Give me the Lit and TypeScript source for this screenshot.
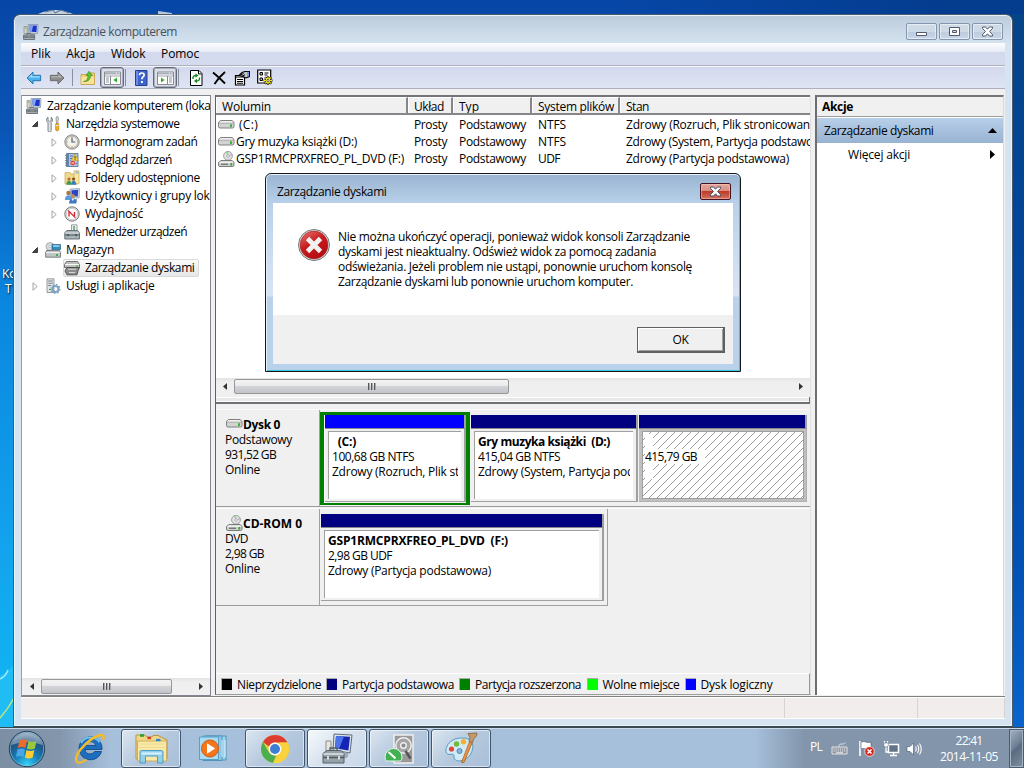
import { LitElement, html, svg, css, nothing } from "lit";
import { customElement } from "lit/decorators.js";
import { styleMap } from "lit/directives/style-map.js";

const FAMILY = '"Open Sans", "Noto Sans", sans-serif';
const pen = document.createElement("canvas").getContext("2d")!;

/* Label whose tracking is adjusted to a given width. A "|" ends the measured part. */
function t(text: string, w: number, bold = false, size = 12) {
  const part = text.split("|")[0];
  pen.font = `${bold ? 700 : 400} ${size}px ${FAMILY}`;
  const ls = (w - pen.measureText(part).width) / part.length;
  return html`<span class="t ${bold ? "b" : ""}" style=${styleMap({ letterSpacing: ls.toFixed(3) + "px", fontSize: size + "px" })}>${text.replace("|", "")}</span>`;
}

const ic = (body: unknown, w = 16, h = 16, vb = `0 0 ${w} ${h}`) =>
  html`<svg class="ic" width=${w} height=${h} viewBox=${vb}>${body}</svg>`;

const computer = svg`<path d="M5 .5h10l-.5 9-9-.8z" fill="#dfe6ee" stroke="#8593a5" stroke-width=".8"/><path d="M6.3 1.6h7.6l-.4 6.6-6.8-.6z" fill="#1c35c8"/><path d="M6.3 1.6h4L8.6 7.8l-1.9-.2z" fill="#7fa5f0"/><path d="M1 2.5h3.2v7H1z" fill="#d6d6cc" stroke="#8d8d85" stroke-width=".7"/><path d="M1.8 4h1.6" stroke="#58a858"/><path d="M9 9h3v2H9z" fill="#9aa4ae"/><path d="M.6 11h11v4.5H.6z" fill="#a3abb0" stroke="#58636b" stroke-width=".8"/><path d="M4 11V9.6h4V11M.6 13h11M3 12.4v1.4M9 12.4v1.4" stroke="#4b555c" fill="none" stroke-width=".8"/>`;
const tools = svg`<path d="M3 1.2v3.3l1.6 1 1.6-1V1.2C8 2.4 8 5.300 6.200 6.400V14.500a1.600 1.600 0 0 1-3.200 0V6.400C1 5.300 1 2.400 3 1.200z" fill="#e0e3e5" stroke="#6f787d" stroke-width=".9"/><path d="M11.500.8h1.500l.4 2-.7 5h-1l-.7-5z" fill="#d8dcdf" stroke="#7b8288" stroke-width=".7"/><path d="M10.700 7.800h3v6.200q-1.500 2-3 0z" fill="#f5b21c" stroke="#b87c08" stroke-width=".7"/><path d="M10.700 9.500h3" stroke="#e8e8e8"/>`;
const clock = svg`<circle cx="8" cy="8" r="7.200" fill="#c9c9c6" stroke="#858585" stroke-width=".9"/><circle cx="8" cy="8" r="5.600" fill="#f6f3e4" stroke="#a6a59f" stroke-width=".6"/><path d="M8 3.800V8h3.400" stroke="#3f6390" fill="none" stroke-width="1.200"/><path d="M8 2.900v.8M8 12.300v.8M2.900 8h.8" stroke="#c07a3c"/>`;
const events = svg`<path d="M2.500 1.500h11.500v13H2.500z" fill="#a9c6ea" stroke="#5b7896" stroke-width=".9"/><path d="M4 2v12" stroke="#4a6fa5" stroke-width="1.500"/><path d="M6 4h3M6 6.500h2M6 9h2M6 11.500h7" stroke="#5578a8"/><path d="M1 3.500h3M1 6h3M1 8.500h3M1 11h3M1 13.200h3" stroke="#6e7880" stroke-width=".8"/><path d="M10.800 2l3.700 6.500H7.500z" fill="#ffd93c" stroke="#b88e14" stroke-width=".6"/><path d="M11 4.300v2.200M11 7.200v.7" stroke="#222"/><circle cx="8.800" cy="11" r="2.600" fill="#d83a30" stroke="#fff" stroke-width=".4"/><path d="M7.600 11H10" stroke="#fff"/>`;
const shared = svg`<path d="M1 2.500h5l1 1.500h5.500v10H1z" fill="#f2d98a" stroke="#c5a55a" stroke-width=".7"/><path d="M10 .8h5v13h-5z" fill="#f9e8a5" stroke="#c9a95a" stroke-width=".7"/><path d="M11.500 1.500h3v2h-3z" fill="#8fb8e8"/><circle cx="5" cy="9" r="1.600" fill="#a9703b"/><path d="M2.300 14.800q.3-4 2.700-4t2.700 4z" fill="#3d9a4e"/><circle cx="9.600" cy="9" r="1.600" fill="#7c4c24"/><path d="M7.200 14.800q.3-4 2.500-4t2.700 4z" fill="#3b7bc5"/>`;
const users = svg`<path d="M6 1l9.500-.5-.5 9.500-8-.5z" fill="#dae1e9" stroke="#8492a4" stroke-width=".7"/><path d="M7.400 2.200l6.800-.4-.4 6.700-6-.3z" fill="#2846c8"/><path d="M10 11h3v3h-3z" fill="#9aa3ab"/><circle cx="4.500" cy="5" r="2.200" fill="#a9773f"/><path d="M.8 12q.3-4.800 3.700-4.800T8.200 12z" fill="#5a9ade"/><circle cx="8.800" cy="8" r="2.100" fill="#c48a52"/><path d="M5 15.500q.3-5 3.800-5t3.800 5z" fill="#3f78c4"/><path d="M7.500 11l1.300 2 1.200-2z" fill="#fff"/>`;
const perf = svg`<circle cx="8" cy="8" r="7.200" fill="#e4e4e4" stroke="#777" stroke-width="1"/><circle cx="8" cy="8" r="5.700" fill="#fff" stroke="#b0b0b0" stroke-width=".6"/><path d="M5 10.500V5.300l5.500 5.400V6" stroke="#cf1d28" stroke-width="1.300" fill="none"/><path d="M4 4.300l7.500 7.500" stroke="#e05058" stroke-width=".8"/>`;
const devices = svg`<path d="M7.500.8h5.500v8H7.500z" fill="#eef0f0" stroke="#858c90" stroke-width=".8"/><path d="M10 2v4" stroke="#3d9a4e" stroke-width="1.300"/><path d="M.8 8.500L3 6.500h10.500L15.500 9v6H.8z" fill="#a9b3b9" stroke="#5d686f" stroke-width=".9"/><path d="M.8 11h14.700" stroke="#4b555c"/><path d="M1.200 9h14" stroke="#dfe5e8"/><path d="M4 10v2.200M12 10v2.200" stroke="#3c464c" stroke-width="1.200"/>`;
const storage = svg`<circle cx="5" cy="4.500" r="4" fill="#d9dde0" stroke="#8b9296" stroke-width=".7"/><circle cx="5" cy="4.500" r="1.200" fill="#fff" stroke="#8b9296" stroke-width=".5"/><path d="M7 2.500h8.500v5H7z" fill="#2d8ec6" stroke="#2a5f82" stroke-width=".7"/><path d="M8 4h6.500" stroke="#bfe3f7" stroke-width="1.300"/><path d="M1.500 8.500h13l1 2v4.700H.6v-4.700z" fill="#bfc4c6" stroke="#646b6f" stroke-width=".8"/><path d="M1 10.600h14" stroke="#f3f5f6"/><path d="M12 12v2" stroke="#30b030" stroke-width="1.800"/>`;
const diskmgmt = svg`<path d="M2.500 1.500h11l2 3v3h-15v-3z" fill="#bdbdbd" stroke="#666" stroke-width=".9"/><path d="M1 4.600h14" stroke="#fff"/><path d="M3 7.500h12.500L14 11l-1 3.800H3L1 11z" fill="#8c8c8c" stroke="#4a4a4a" stroke-width=".9"/><path d="M4 9.300h8M5 12.500h6" stroke="#d6d6d6" stroke-width="1.100"/><path d="M12 5.800h2" stroke="#3bbf3b" stroke-width="1.300"/>`;
const services = svg`<path d="M2 .8h7v13.700H2z" fill="#e1e5e8" stroke="#7f898f" stroke-width=".8"/><path d="M3.200 3h4.600M3.200 5.200h4.600M3.200 7.500h3" stroke="#7b858b"/><path d="M4 11.500h2" stroke="#38a038"/><circle cx="10.500" cy="11" r="3" fill="none" stroke="#7fa2c2" stroke-width="2.200"/><circle cx="10.500" cy="11" r="4.500" fill="none" stroke="#7fa2c2" stroke-width="1.300" stroke-dasharray="1.500 2"/>`;
const driveBody = svg`<path d="M2.500 3.500h11.500l2 1.800v4.200q0 1.500-1.500 1.500H2Q.5 11 .5 9.500V5.300z" fill="#d3d3d3" stroke="#757575" stroke-width=".9"/><path d="M2.600 4.300h11.300l1.200 1.200H1.300z" fill="#f8f8f8"/><path d="M1 6.300h14" stroke="#a5a5a5" stroke-width=".7"/><path d="M13 7.300v2.600" stroke="#25b325" stroke-width="1.800"/>`;
const drive = () => ic(driveBody, 17, 16);
const cd = () => ic(svg`<circle cx="10" cy="4.800" r="4.400" fill="#e3e3e3" stroke="#8a8a8a" stroke-width=".8"/><path d="M10 5L7.500 1.200A4.700 4.700 0 0 1 10.500.5z" fill="#9cd4a5"/><path d="M10 5l4-2.500.4 2z" fill="#c5a9d8"/><circle cx="10" cy="5" r="1.300" fill="#fff" stroke="#888" stroke-width=".6"/><path d="M3 9.500h11l2 1.800v3q0 1.200-1.500 1.200H2q-1.500 0-1.500-1.200v-3z" fill="#cfcfcf" stroke="#707070" stroke-width=".9"/><path d="M1.500 11.200h13.500" stroke="#fff"/><path d="M3 13.200h7" stroke="#555"/><path d="M13.300 12v2.600" stroke="#25b325" stroke-width="1.800"/>`, 17, 16);

const arrowShape = "M.7 7L6.700 1v3.300h7.600v5.400H6.700V13z";
const back = svg`<path d=${arrowShape} transform="translate(.3 1)" fill="#49b1ec" stroke="#1d6ea8" stroke-width=".9"/><path d="M2.600 7.500l3.600-3.400v2.100h7.500v1.300z" fill="#a7ddf8"/>`;
const fwd = svg`<g transform="translate(15.700 1) scale(-1 1)"><path d=${arrowShape} fill="#8d8d8d" stroke="#636363" stroke-width=".9"/><path d="M2.600 6.500l3.600-3.400v2.100h7.500v1.300z" fill="#b4b4b4"/></g>`;
const up = svg`<path d="M1 4.500h8l1-1.500h4.500v11.500H1z" fill="#f4d272" stroke="#c19b42" stroke-width=".8"/><path d="M1.500 7h12.500v7H1.500z" fill="#f9e196"/><path d="M3.500 11.500q4.500-.5 4.500-6h-2L9 1.300l3.500 4.200h-2q0 6.500-7 6z" fill="#58c234" stroke="#2f8a1c" stroke-width=".6"/>`;
const pane = (right: boolean) => svg`<path d="M.5 2h16v12.500H.5z" fill="#fff" stroke="#868b93"/><path d="M1 3.500h15" stroke="#a9b0ba" stroke-width="2"/><path d="M12 3h1M14.500 3h1" stroke="#fff"/><path d="M1 6h15" stroke="#868b93" stroke-width=".8"/>${right
  ? svg`<path d="M10.500 6v8" stroke="#868b93"/><path d="M12 8h3M12 10h3M12 12h3" stroke="#8c939e"/><path d="M4 7.500v5l3.700-2.500z" fill="#2fb12a"/>`
  : svg`<path d="M6.500 6v8" stroke="#868b93"/><path d="M2 8h3M2 10h3M2 12h3" stroke="#8c939e"/><path d="M13 7.500v5L9.300 10z" fill="#2fb12a"/>`}`;
const help = svg`<path d="M2.500.5h11.500v15H2.500z" fill="#3f63cd" stroke="#26408e"/><path d="M4 1v14" stroke="#7e9bea" stroke-width="1.500"/><path d="M6.500 5.200q0-2.200 2.300-2.200t2.300 2q0 1.300-1.200 2-1 .7-1 2.200" fill="none" stroke="#fff" stroke-width="1.700"/><path d="M8.900 11v2" stroke="#fff" stroke-width="1.900"/>`;
const refresh = svg`<path d="M2.500.5h8.500l3 3v12H2.500z" fill="#fff" stroke="#000"/><path d="M10.500 1v3h3" fill="none" stroke="#000"/><path d="M5 9q-.5-3.500 3-3.500M11.500 7.500q.5 3.500-3 3.500" fill="none" stroke="#138a1c" stroke-width="1.400"/><path d="M7.500 3.200l3 2.300-3 2.300zM9 13.300L6 11l3-2.300z" fill="#138a1c"/>`;
const del = svg`<path d="M2 2.500q5 4 12 11M14 2Q8 7 3.500 14" fill="none" stroke="#000" stroke-width="1.900"/>`;
const props = svg`<path d="M1.500 5.500h9v9.500h-9z" fill="#fff" stroke="#000" stroke-width="1.200"/><path d="M1 7h9M3 9.500h6M3 11.500h6M3 13.300h6" stroke="#000" stroke-width="1.100"/><path d="M5 5.500l3-3 3-1h4.500v5L12 8 9 6.500z" fill="#c8c8c8" stroke="#000" stroke-width="1.100"/><path d="M6.500 5l3-1.500M8 6.200l3-1.500" stroke="#000"/><path d="M14 1.500v5" stroke="#36f"/>`;
const settings = svg`<path d="M.7 1h13v13H.7z" fill="#fff" stroke="#000" stroke-width="1.200"/><path d="M3 3.500h2.500v2.500H3zM3 9h2.500v2.500H3z" fill="#bbb" stroke="#000"/><path d="M7.500 4h4M7.500 6h3M8 8.500h3" stroke="#000"/><path d="M11 7v9M6.500 11.500h9M7.800 8.300l6.400 6.400M14.200 8.300l-6.400 6.400" stroke="#222" stroke-width="2.200"/><path d="M11 7.500v8M7 11.500h8M8.200 8.700l5.600 5.600M13.800 8.700l-5.600 5.600" stroke="#ffe81c" stroke-width="1.200"/><circle cx="11" cy="11.500" r="2.300" fill="#ffee2e"/><circle cx="11" cy="11.500" r="1.100" fill="#fff" stroke="#000" stroke-width=".6"/>`;

const start = () => html`<svg class="ic" width="38" height="38" viewBox="0 0 38 38">
  <defs><radialGradient id="o" cx=".5" cy=".95" r=".9"><stop offset="0" stop-color="#35d5fb"/><stop offset=".4" stop-color="#167fb8"/><stop offset=".8" stop-color="#204f7c"/><stop offset="1" stop-color="#6f91ac"/></radialGradient></defs>
  <circle cx="19" cy="19" r="17.700" fill="url(#o)" stroke="#273f55" stroke-width="1"/><circle cx="19" cy="19" r="16.700" fill="none" stroke="#9fc4dc" stroke-opacity=".6"/>
  <path d="M3.500 15a16 16 0 0 1 31 0q-15-6-31 0z" fill="#fff" opacity=".36"/>
  <path d="M11.500 10.500q4-2 7.500 0l-1.600 7.500q-4-2-7.600 0z" fill="#ec6a2c"/><path d="M20.500 11q3.500 2 8 0L26.800 18.500q-4 2-7.900 0z" fill="#98c93a"/>
  <path d="M9.400 19.600q3.800-2 7.600 0l-1.600 7.500q-3.600-2-7.500 0z" fill="#47a7e6"/><path d="M18.500 20q4 2 7.900 0l-1.700 7.400q-4 2-7.800 0z" fill="#fcca35"/></svg>`;
const ie = svg`<path d="M26.500 21a11.500 11.500 0 1 1 1.500-6.500v2H11q.5 4.500 5 4.500 3 0 4.500-2.500h7z M11.200 12.500h10.500q-.6-4-5.100-4t-5.400 4z" fill="#1c6fc0" fill-rule="evenodd" stroke="#0e437c" stroke-width=".8"/><path d="M7 10q3-5.500 9-5.700 6.500 0 9.500 5" fill="none" stroke="#72c8f6" stroke-width="1.700"/><path d="M3.500 29.500q-4-4 3-13Q16 5 26 2q5.500-.8 3 5" fill="none" stroke="#f3bb25" stroke-width="2.400"/><path d="M3.500 29.500q3.500 1 9-3" fill="none" stroke="#f3bb25" stroke-width="2"/>`;
const explorer = svg`<path d="M1 5.500V2h9l1.500 2H17l1-1.500h5L32 7v19H1z" fill="#f2d784" stroke="#b99646"/><path d="M2.500 8h29v20h-29z" fill="#f8e9a9" stroke="#cdae5f"/><path d="M5 2.500h4" stroke="#29a32e" stroke-width="2.600"/><path d="M12.500 5H16" stroke="#cf3c23" stroke-width="2.400"/><path d="M21 7h4.500" stroke="#2e89d6" stroke-width="2.400"/><path d="M4 11h26M4 14.500h26" stroke="#f0d98c"/><path d="M5 30V19q0-1.500 1.500-1.500h20Q28 17.500 28 19v11h-5.500v-7h-12v7z" fill="#8ccdec" fill-opacity=".93" stroke="#4e9cc5"/><path d="M6.500 20.500h20" stroke="#d8f3ff" stroke-width="2"/>`;
const wmp = svg`<path d="M8 3h20v24H8z" fill="#9ad4ee" stroke="#4e93ba"/><path d="M5 3h19v24.500H5z" fill="#8cc9e9" stroke="#4e93ba"/><path d="M1.500 4h19v22.500h-19z" fill="#a8dcf3" stroke="#5a9fc4"/><path d="M24 7v17M27 7v17" stroke="#dff5ff"/><circle cx="12" cy="15.500" r="8.500" fill="#f4761c" stroke="#d65a0b"/><path d="M9 10.300v10.400l8.200-5.200z" fill="#fff"/>`;
const chrome = svg`<circle cx="15" cy="15" r="14" fill="#e8d042"/><path d="M2.900 8A14 14 0 0 1 27.500 8.500H15q-4 0-6 4z" fill="#dd3e31"/><path d="M2.900 8L9 18.500q2 3 6 3l1 .2L13 28.900A14 14 0 0 1 2.900 8z" fill="#4cae4f"/><path d="M13 28.900L20.500 18q1.500-5-1-9.500h8A14 14 0 0 1 13 28.900z" fill="#fad23b"/><circle cx="15" cy="15" r="6.400" fill="#fff"/><circle cx="15" cy="15" r="5" fill="#3f7fd2"/>`;
const mgmt = svg`<path d="M12 1l18 1-2 18-17-3z" fill="#dbe2ea" stroke="#5c6c80"/><path d="M14 3l14 .8-1.600 13.700L13 15.200z" fill="#1424b4"/><path d="M14 3l8 .5-5 12.400-4-.7z" fill="#4c74e8"/><path d="M4 8h5v12H4z" fill="#e6e6df" stroke="#8c8c85"/><path d="M20 19l6 1v4l-6 3z" fill="#a3abb5"/><path d="M1 20.500l4-3h14l3 3v9.500H1z" fill="#97a1a8" stroke="#57636b"/><path d="M1.500 21h20" stroke="#dfe5e9" stroke-width="1.500"/><path d="M8 17.500V15h7v2.500M1 24.500h21" fill="none" stroke="#505b62" stroke-width="1.300"/><path d="M6 23v3.500M17 23v3.500" stroke="#dfe5e9" stroke-width="1.800"/>`;
const hdd = svg`<path d="M10 1h19v28H10z" fill="#999" stroke="#f0f0f0" stroke-width="1.500"/><circle cx="19.500" cy="11.500" r="7.700" fill="#a5a5a5" stroke="#eee" stroke-width="1.500"/><circle cx="19.500" cy="11.500" r="2.800" fill="#8b8b8b" stroke="#eee" stroke-width="1.500"/><path d="M21.500 17l5 7.500" stroke="#555" stroke-width="2.500"/><path d="M1 23a8.500 8.500 0 0 1 17 0q0 2.500-1.500 4h-14Q1 25.500 1 23z" fill="#43b153" stroke="#e5f5e8"/><path d="M4.500 18l7 6.500" stroke="#fff" stroke-width="2"/>`;
const paint = svg`<path d="M15 6q12-1 13 8-1 13-13 15-6 0-6-4 .5-4-4-2.500-5 0-4-6Q4 7 15 6z" fill="#d2e9f6" stroke="#5a9cc4"/><circle cx="6.500" cy="17" r="2.600" fill="#dd4638"/><circle cx="11.500" cy="12" r="2.700" fill="#6dbb38"/><circle cx="18.500" cy="9.700" r="2.700" fill="#f4b22b"/><circle cx="14.500" cy="19" r="2.500" fill="#82b6dd" stroke="#4e86b2"/><path d="M16.500 30.500l8-21 2.800 1-8.300 20z" fill="#ef9340" stroke="#a55a1a" stroke-width=".7"/><path d="M24 9.500l1-4-2-4 9-.5q.5 3-3 5.500l-1.500 4z" fill="#c3986a" stroke="#8b6238" stroke-width=".8"/>`;

const tree: [number, string, unknown, unknown][] = [
  [0, "", computer, t("Zarządzanie komputerem (loka|lny)", 163.5)],
  [1, "open", tools, t("Narzędzia systemowe", 113.5)],
  [2, "shut", clock, t("Harmonogram zadań", 112.5)],
  [2, "shut", events, t("Podgląd zdarzeń", 87)],
  [2, "shut", shared, t("Foldery udostępnione", 115)],
  [2, "shut", users, t("Użytkownicy i grupy lok|alne", 124.5)],
  [2, "shut", perf, t("Wydajność", 58)],
  [2, "", devices, t("Menedżer urządzeń", 102)],
  [1, "open", storage, t("Magazyn", 48)],
  [2, "sel", diskmgmt, t("Zarządzanie dyskami", 109.5)],
  [1, "shut", services, t("Usługi i aplikacje", 88.5)],
];

const volumes = [
  [drive(), html`<span class="lead">${t("(C:)", 19)}</span>`, "NTFS", 28, t("Zdrowy (Rozruch, Plik stronicowan|ia, Zrzut)", 184)],
  [drive(), t("Gry muzyka książki (D:)", 121), "NTFS", 28, t("Zdrowy (System, Partycja podstaw|owa)", 180)],
  [cd(), t("GSP1RMCPRXFREO_PL_DVD (F:)", 168), "UDF", 22, t("Zdrowy (Partycja podstawowa)", 163)],
] as const;

const legend: [string, string, number, number][] = [
  ["#000", "Nieprzydzielone", 84, 105],
  ["#000080", "Partycja podstawowa", 112, 133],
  ["#008000", "Partycja rozszerzona", 106, 127.5],
  ["#00ff00", "Wolne miejsce", 77, 98],
  ["#0000ff", "Dysk logiczny", 72, 90],
];

const xGlyph = (c: string) => html`<svg width="13" height="11" viewBox="0 0 13 11"><path d="M1.500 1H4.600L6.500 3.200 8.400 1h3.100v1.400L8.600 5.500l2.900 3.100V10H8.400L6.500 7.800 4.600 10H1.500V8.600l2.900-3.100-2.900-3.100z" fill="#fff" stroke=${c} stroke-width="1"/></svg>`;

@customElement("app-root")
export class AppRoot extends LitElement {
  static styles = css`
    :host { display: block; width: 1024px; height: 768px; overflow: hidden; font-family: "Open Sans", "Noto Sans", sans-serif; font-size: 12px; color: #000; }
    * { box-sizing: border-box; }
    .t { white-space: pre; display: inline-block; }
    .b { font-weight: 700; }
    .ic, svg { display: block; flex: none; }
    .desktop { position: relative; height: 768px; display: grid; grid-template-rows: 728px 40px; background: linear-gradient(90deg, transparent 60%, rgba(0,45,105,.4) 94%), linear-gradient(180deg, #0646a6 0, #0955b6 130px, #0a86de 300px, #12a5ee 560px, #10b7f5 728px); }
    .desktop::before { content: ""; position: absolute; left: 1012px; top: 14px; width: 12px; height: 714px; background: linear-gradient(#064488, #02459a 30%, #0150b4 75%, #0864cd); }
    .deskart { position: absolute; left: 0; top: 0; }
    .shortcut { position: absolute; left: 2px; top: 266px; line-height: 15px; color: #fff; text-shadow: 1px 1px 2px #000; width: 12px; overflow: hidden; font-size: 12px; white-space: pre; }
    .window { position: relative; margin: 14px 11px 0 13px; height: 714px; border: 1px solid #4b5b6b; border-bottom: 2px solid #3c4a50; border-radius: 7px 7px 0 0; background: linear-gradient(#bccbdb 0, #d6e4f1 30px, #d6e4f1); box-shadow: inset 0 0 0 1px #e9f3fb; padding: 0 7px 7px; display: grid; grid-template-rows: 28px 23px 23px 1fr 22px; }
    .title { display: flex; align-items: center; padding: 5px 2px 0 2px; gap: 4px; color: #47525e; }
    .title .t { flex: 1; }
    .cap { display: flex; gap: 2px; }
    .cbtn { width: 31px; height: 17px; border: 1px solid #8496ad; border-radius: 2px; background: linear-gradient(#cfdae7 50%, #bccbdd 50%, #c9d7e6); box-shadow: inset 0 0 0 1px rgba(255,255,255,.5); display: flex; align-items: center; justify-content: center; }
    .menu { display: flex; align-items: center; padding: 0 9px 0 10px; background: linear-gradient(#fdfdfe 0, #e7ebf6 9px, #d4daee 9px, #d5dbef 21px); border-bottom: 1px solid #b0b3bf; gap: 15.7px; line-height: 20px; }
    .tools { display: flex; align-items: center; background: linear-gradient(#d3d9ed, #dfe4f4); border-bottom: 1px solid #adb0bd; border-top: 1px solid #f3f4fa; padding-left: 5px; }
    .tools .ic { margin-right: 7px; }
    .tools .wide { margin-right: 8px; }
    .tight { margin-left: -3px; }
    .sep { width: 1px; height: 17px; background: #8b909d; margin: 0 7px 0 0; }
    .press { width: 24px; height: 21px; border: 1px solid #64697a; border-radius: 3px; box-shadow: inset 0 0 0 1px #a9afbf; background: #dde0e9; display: flex; align-items: center; justify-content: center; margin-right: 1px; margin-left: -3px; }
    .press .ic { margin: 0; }
    .main { display: grid; grid-template-columns: 190px 596px 189px; column-gap: 4px; padding: 6px 0 0; background: #f0f0f0; border-bottom: 1px solid #808080; min-height: 0; }
    .tree { background: #fff; border: 1px solid #82878f; border-left-color: #9ba0a8; display: flex; flex-direction: column; overflow: hidden; padding-top: 1px; min-height: 0; }
    .rows { flex: 1; }
    .row { display: flex; align-items: center; height: 18px; }
    .row .tw { width: 17px; height: 17px; display: flex; align-items: center; justify-content: center; margin-right: 2px; flex: none; }
    .l0 { padding-left: 4px; } .l0 .tw { display: none; } .l0 .ic { margin-right: 5px; }
    .l1 { padding-left: 4px; } .l1 > .ic { margin-right: 5px; }
    .l2 { padding-left: 23px; } .l2 > .ic { margin-right: 0; }
    .lbl { display: flex; align-items: center; height: 17px; padding-left: 5px; line-height: 16px; }
    .l0 .lbl, .l1 .lbl { padding-left: 0; }
    .item { display: flex; align-items: center; height: 18px; }
    .sel { border: 1px solid #d9d9d9; border-radius: 2px; background: linear-gradient(#fafafa, #e6e6e6); margin-left: -1px; padding-right: 3px; }
    .hs { height: 17px; display: flex; align-items: center; background: linear-gradient(#e3e3e3, #efefef 4px, #f0f0f0); flex: none; }
    .hs .ar { width: 18px; display: flex; justify-content: center; }
    .tree .ar:first-child { width: 19px; }
    .thumb { height: 15px; border: 1px solid #979797; border-radius: 2px; background: linear-gradient(#f4f4f4 0, #e9e9eb 48%, #d3d4d8 50%, #c3c4ca); display: flex; align-items: center; justify-content: center; gap: 1px; }
    .thumb i { width: 2px; height: 7px; background: linear-gradient(90deg, #55575c 50%, #aaa 50%); }
    .grow { flex: 1; }
    .mid { border-left: 1px solid #5f5f64; border-right: 1px solid #e0e0e0; background: #f0f0f0; display: grid; grid-template-rows: 302px 10px 1fr 21px; min-height: 0; min-width: 0; border-bottom: 1px solid #9b9b9b; margin-bottom: 1px; }
    .list { background: #fff; border-top: 2px solid #74747a; display: flex; flex-direction: column; min-width: 0; overflow: hidden; border-bottom: 2px solid #f0f0f0; }
    .cols { display: grid; grid-template-columns: 192px 45px 79px 88px 190px; min-width: 0; }
    .cols > div { overflow: hidden; white-space: nowrap; display: flex; align-items: center; padding-left: 6px; min-width: 0; }
    .head { height: 18px; flex: none; margin-bottom: 1px; }
    .head > div { background: #f0f0f0; border-right: 2px solid #85858a; border-bottom: 2px solid #85858a; border-top: 1px solid #fff; box-shadow: inset 1px 0 #fff; padding-top: 1px; }
    .head > div:last-child { border-right: 0; }
    .vol { height: 17px; }
    .cols > div.v0 { padding-left: 2px; gap: 1px; }
    .lead { margin-left: 3px; }
    .split { height: 7px; border-bottom: 2px solid #707075; border-right: 1px solid #707075; background: linear-gradient(#fff 1px, #e9e9e9 1px, #e9e9e9 4px, #fafafa 4px); }
    .disks { padding-top: 2px; }
    .disk { display: grid; grid-template-columns: 104px 490px; height: 98px; border-bottom: 1px solid #9c9c9c; border-top: 1px solid #fbfbfb; margin-bottom: 1px; }
    .disk.cdr { border-bottom: 0; height: 97px; }
    .dlabel { border-right: 1px solid #a0a0a0; padding: 6px 0 0 9px; line-height: 15px; }
    .cdr .dlabel { border-bottom: 1px solid #9c9c9c; }
    .dname { display: flex; align-items: center; height: 16px; padding-left: 1px; }
    .dlabel .t { display: block; }
    .parts { display: flex; align-items: flex-start; padding-top: 2px; }
    .part { display: flex; flex-direction: column; }
    .green { border: 4px solid #008000; border-top-width: 3px; border-bottom-width: 2px; width: 150px; height: 93px; padding-left: 1px; background: #f0f0f0; box-shadow: inset 1px 0 #fff; }
    .bar { height: 14px; background: #000080; border-bottom: 1px solid #888; border-right: 2px solid #a0a0a0; margin-top: 1px; flex: none; }
    .green .bar { margin-top: 0; background: #0000ff; }
    .cell { border-bottom: 1px solid #a0a0a0; border-right: 2px solid #a0a0a0; height: 73px; padding: 2px 3px 3px 3px; }
    .in { background: #fff; border-left: 1px solid #a0a0a0; border-top: 1px solid #a0a0a0; height: 68px; padding: 2px 3px 0 3px; line-height: 15px; overflow: hidden; }
    .in .t, .in .clip { display: block; overflow: hidden; }
    .p2, .p3 { padding-top: 2px; margin-left: 1px; }
    .p2 { width: 167px; } .p3 { width: 168px; }
    .p3 .cell { background: #c0c0c0; border-color: #b0b0b0; border-right-width: 1px; padding: 2px 2px 3px 3px; }
    .p3 .in { border: 1px solid #a0a0a0; background: #fff; background-image: linear-gradient(135deg, transparent 45%, #a0a0a0 46%, #a0a0a0 54%, transparent 55%); background-size: 8px 8px; padding: 2px 0 0 2px; }
    .p3 .in .t { background: #fff; display: block; width: 60px; }
    .blank { background: #fff; width: 8px; height: 15px; }
    .cdp { width: 288px; height: 97px; border-right: 1px solid #a0a0a0; border-bottom: 1px solid #a0a0a0; padding: 2px 3px 2px 1px; margin-top: -2px; }
    .cdp .bar { margin-top: 3px; height: 14px; }
    .legend { border-top: 1px solid #fff; border-right: 1px solid #999; display: flex; align-items: center; padding-left: 5px; }
    .lg { display: flex; align-items: center; gap: 5px; flex: none; }
    .sq { width: 11px; height: 12px; border: 1px solid #aaa; border-right: 0; border-bottom: 0; }
    .acts { border-left: 2px solid #6d6d72; border-top: 2px solid #74747a; border-right: 1px solid #d8d8d8; background: #fff; margin-bottom: 1px; }
    .ah { height: 20px; background: #f0f0f0; border-bottom: 1px solid #9c9c9c; padding-left: 5px; display: flex; align-items: center; }
    .ag { height: 25px; margin-top: 1px; background: linear-gradient(#b8cfe8, #98b2d2); padding: 0 6px 0 7px; display: flex; align-items: center; justify-content: space-between; }
    .am { height: 23px; padding: 0 8px 0 31px; display: flex; align-items: center; justify-content: space-between; }
    .status { background: #f1eded; border-top: 1px solid #fff; display: grid; grid-template-columns: 764px 133px 1fr; border-bottom: 1px solid #fff; }
    .status div { border-right: 1px solid #d7d3d3; }
    .dialog { position: absolute; left: 265px; top: 173px; width: 476px; height: 199px; border: 1px solid #14181c; border-radius: 6px 6px 0 0; box-shadow: inset 1px 0 #e6f0fa, inset 0 1px #e9f2fb, inset -1px -1px #35c7dd; background: linear-gradient(#99b4d1, #b9d1ea 30px, #cfdff1 90px, #d7e4f4 122px, #b9d1ea 123px); padding: 0 7px 7px; display: grid; grid-template-rows: 29px 112px 49px; }
    .dt { display: flex; justify-content: space-between; align-items: center; padding: 6px 2px 0 4px; }
    .close { width: 31px; height: 17px; border: 1px solid #431322; border-radius: 2px; background: linear-gradient(#e5a79c, #d88d80 48%, #bd3b26 50%, #d4705f); box-shadow: inset 0 0 0 1px rgba(255,210,200,.45); display: flex; align-items: center; justify-content: center; }
    .db { background: #fff; display: flex; padding: 26px 0 0 25px; gap: 7px; line-height: 15px; }
    .db .t { display: block; }
    .df { background: #f0f0f0; display: flex; justify-content: flex-end; padding: 12px 8px 0 0; }
    .ok { width: 88px; height: 26px; border: 1px solid #606060; border-right-width: 2px; border-bottom-width: 2px; box-shadow: inset 1px 1px #fff, inset -1px -1px #a0a0a0; display: flex; align-items: center; justify-content: center; }
    .task { border-top: 1px solid #c9daea; background: linear-gradient(90deg, #7c8ea3 0, #8396ac 60px, #a6bfdb 110px, #a6bfdb 755px, #8295ab 805px, #8295ab); display: flex; box-shadow: 0 -1px #3c4a50; position: relative; }
    .cellb { width: 60px; height: 39px; display: flex; align-items: center; justify-content: center; margin-right: 2px; }
    .cellb.orb { width: 53px; margin-right: 6px; }
    .on { border: 1px solid #43566c; border-radius: 3px; background: linear-gradient(135deg, #dbe6f1, #b5c8dd 50%, #a9bfd9); box-shadow: inset 0 0 0 1px rgba(255,255,255,.55); }
    .act { background: linear-gradient(135deg, #f6f9fc, #d6e1ee 50%, #c8d8ea); }
    .tray { display: flex; align-items: center; color: #fff; margin-left: auto; }
    .kbd { margin-left: 9px; } .flag { margin-left: 10px; } .net { margin-left: 8px; } .vol2 { margin: 0 8px 0 6px; }
    .lang { margin-top: -5px; }
    .clock { width: 76px; text-align: center; line-height: 16px; margin-top: 1px; }
    .show { width: 15px; height: 39px; margin-left: 2px; border: 1px solid #4c5d70; background: linear-gradient(135deg, #a5b3c3, #6b7d92 45%, #596b80 50%, #8090a4); box-shadow: inset 0 0 0 1px #a4b2c2; }
  `;

  private arrow(left: boolean) {
    return html`<span class="ar"><svg width="4" height="7" viewBox="0 0 4 7"><path d=${left ? "M4 0v7L0 3.500z" : "M0 0v7l4-3.500z"} fill="#333"/></svg></span>`;
  }

  private hscroll(w: number) {
    return html`<div class="hs">${this.arrow(true)}<div class="thumb" style=${styleMap({ width: w + "px" })}><i></i><i></i><i></i></div><span class="grow"></span>${this.arrow(false)}</div>`;
  }

  private row([lv, kind, icon, label]: [number, string, unknown, unknown]) {
    const tw = kind === "open"
      ? svg`<path d="M6.500 1.500v5h-5z" fill="#444" stroke="#222" stroke-width=".8"/>`
      : kind === "shut" ? svg`<path d="M2 .8v7.400l4.200-3.700z" fill="#fff" stroke="#999" stroke-width=".9"/>` : nothing;
    return html`<div class="row l${lv}"><span class="tw">${ic(tw, 8, 9)}</span>${lv === 2
      ? html`<span class="item ${kind === "sel" ? "sel" : ""}">${ic(icon)}<span class="lbl">${label}</span></span>`
      : html`${ic(icon)}<span class="lbl">${label}</span>`}</div>`;
  }

  render() {
    return html`<div class="desktop">
      <svg class="deskart" width="1024" height="728" viewBox="0 0 1024 728"><path d="M38 14q17-8 35 0z" fill="#c2cedb"/><path d="M45 12l8-2 2 3 6-3 8 3" stroke="#52708f" fill="none"/><path d="M158 11l14 2v2h-14z" fill="#b9c8d8"/><path d="M0 675q5-2 9-5l5-6v64H0z" fill="#20bdf5"/><path d="M0 718q8-9 14-20" stroke="#b8e87c" stroke-width="1.500" fill="none"/><path d="M0 679q6-3 8-9" stroke="#a7e6fb" stroke-width="1.500" fill="none"/></svg>
      <div class="shortcut">Ko
 T</div>
      <div class="window">
        <div class="title">${ic(computer)}${t("Zarządzanie komputerem", 134)}<span class="cap">
          <span class="cbtn"><svg width="13" height="11" viewBox="0 0 13 11"><path d="M1.500 6.500h10v3h-10z" fill="#fff" stroke="#535a70"/></svg></span>
          <span class="cbtn"><svg width="13" height="11" viewBox="0 0 13 11"><path d="M1.500 1.500h10v8h-10zM4.500 4.500h4v2h-4z" fill="#fff" stroke="#535a70" fill-rule="evenodd"/></svg></span>
          <span class="cbtn">${xGlyph("#535a70")}</span></span></div>
        <div class="menu">${t("Plik", 19.5)}${t("Akcja", 29)}${t("Widok", 34.5)}${t("Pomoc", 38)}</div>
        <div class="tools">${ic(back)}${ic(fwd)}<span class="sep"></span>${ic(up)}<span class="press">${ic(pane(false), 17, 16)}</span><span class="sep"></span>${ic(help)}<span class="press">${ic(pane(true), 17, 16)}</span><span class="sep"></span><span class="wide"></span><span class="tight"></span><span class="tight"></span>${ic(refresh)}${ic(del)}${ic(props)}<span></span>${ic(settings, 16, 17)}</div>
        <div class="main">
          <div class="tree"><div class="rows">${tree.map((r) => this.row(r))}</div>${this.hscroll(131)}</div>
          <div class="mid">
            <div class="list">
              <div class="cols head"><div>${t("Wolumin", 49)}</div><div>${t("Układ", 30)}</div><div>${t("Typ", 20)}</div><div>${t("System plików", 76)}</div><div>${t("Stan", 23)}</div></div>
              ${volumes.map(([icon, name, fs, fw, st]) => html`<div class="cols vol"><div class="v0">${icon}${name}</div><div>${t("Prosty", 33)}</div><div>${t("Podstawowy", 67)}</div><div>${t(fs, fw)}</div><div>${st}</div></div>`)}
              <span class="grow"></span>${this.hscroll(275)}
            </div>
            <div class="split"></div>
            <div class="disks">
              <div class="disk">
                <div class="dlabel"><div class="dname">${drive()}${t("Dysk 0", 37, true)}</div>${t("Podstawowy", 67)}${t("931,52 GB", 51)}${t("Online", 35)}</div>
                <div class="parts">
                  <div class="part green"><div class="bar"></div><div class="cell"><div class="in">${t("  (C:)", 24, true)}${t("100,68 GB NTFS", 82)}<div class="clip">${t("Zdrowy (Rozruch, Plik st|ronicowania)", 127)}</div></div></div></div>
                  <div class="part p2"><div class="bar"></div><div class="cell"><div class="in">${t("Gry muzyka książki  (D:)", 132, true)}${t("415,04 GB NTFS", 82)}<div class="clip">${t("Zdrowy (System, Partycja po|dstawowa)", 149)}</div></div></div></div>
                  <div class="part p3"><div class="bar"></div><div class="cell"><div class="in"><div class="blank"></div>${t("415,79 GB", 52)}<div class="blank"></div></div></div></div>
                </div>
              </div>
              <div class="disk cdr">
                <div class="dlabel"><div class="dname">${cd()}${t("CD-ROM 0", 59, true)}</div>${t("DVD", 23)}${t("2,98 GB", 39)}${t("Online", 35)}</div>
                <div class="parts"><div class="part cdp"><div class="bar"></div><div class="cell"><div class="in">${t("GSP1RMCPRXFREO_PL_DVD  (F:)", 180, true)}${t("2,98 GB UDF", 64)}${t("Zdrowy (Partycja podstawowa)", 163)}</div></div></div></div>
              </div>
            </div>
            <div class="legend">${legend.map(([c, n, w, box]) => html`<span class="lg" style=${styleMap({ width: box + "px" })}><i class="sq" style=${styleMap({ background: c })}></i>${t(n, w)}</span>`)}</div>
          </div>
          <div class="acts"><div class="ah">${t("Akcje", 31, true)}</div><div class="ag">${t("Zarządzanie dyskami", 109.5)}<svg width="9" height="5" viewBox="0 0 9 5"><path d="M0 5h9L4.500 0z"/></svg></div><div class="am">${t("Więcej akcji", 62)}<svg width="5" height="9" viewBox="0 0 5 9"><path d="M0 0v9l5-4.500z"/></svg></div></div>
        </div>
        <div class="status"><div></div><div></div><div></div></div>
      </div>
      <div class="task">
        <span class="cellb orb">${start()}</span><span class="cellb">${ic(ie, 31, 32)}</span>
        <span class="cellb on">${ic(explorer, 33, 32)}</span><span class="cellb">${ic(wmp, 30, 31)}</span>
        <span class="cellb on">${ic(chrome, 30, 30)}</span><span class="cellb on act">${ic(mgmt, 31, 31)}</span>
        <span class="cellb on">${ic(hdd, 30, 30)}</span><span class="cellb on">${ic(paint, 33, 33)}</span>
        <div class="tray"><span class="lang">${t("PL", 12)}</span>
          <svg class="kbd" width="17" height="16" viewBox="0 0 17 16"><path d="M8 6V4.500Q8 3 10 3h2q2 0 2.500-1.500" fill="none" stroke="#ddd"/><path d="M1 6h15v7H1z" fill="#8a95a2" stroke="#e4e4e4"/><path d="M2.500 8h12M2.500 10h12" stroke="#eee" stroke-dasharray="1.200 .9"/><path d="M5 11.800h7" stroke="#eee"/></svg>
          <svg class="flag" width="17" height="17" viewBox="0 0 17 17"><path d="M2 1v15" stroke="#fff" stroke-width="1.600"/><path d="M3 2q3-1 5 0t5 0v7q-3 1-5 0t-5 0z" fill="#fff" stroke="#435468" stroke-width=".6"/><circle cx="11.500" cy="11.500" r="4.800" fill="#d9251d" stroke="#fff" stroke-width=".7"/><path d="M9.500 9.500l4 4M13.500 9.500l-4 4" stroke="#fff" stroke-width="1.500"/></svg>
          <svg class="net" width="17" height="17" viewBox="0 0 17 17"><path d="M5.500 4.500h10v8h-10z" fill="#617489" stroke="#fff" stroke-width="1.500"/><path d="M10.500 13v2M7 15.500h7M3 7v5h2M1.500 1v3M4.500 1v3" stroke="#fff" stroke-width="1.300" fill="none"/><path d="M.8 3h4.500v2.500L4 7H2L.8 5.500z" fill="#fff" stroke="#435468" stroke-width=".5"/></svg>
          <svg class="vol2" width="17" height="16" viewBox="0 0 17 16"><path d="M1 5.500h3L7.500 2v12L4 10.500H1z" fill="#fff" stroke="#44566a" stroke-width=".6"/><path d="M9.500 5.500q1.500 2.500 0 5M11.500 4q2.500 4 0 8M13.500 2.500q3.500 5.500 0 11" fill="none" stroke="#fff" stroke-width="1.100"/></svg>
          <div class="clock">${t("22:41", 27)}<br>${t("2014-11-05", 58)}</div><div class="show"></div></div>
      </div>
      <div class="dialog">
        <div class="dt">${t("Zarządzanie dyskami", 109.5)}<span class="close">${xGlyph("#4a4f66")}</span></div>
        <div class="db"><svg width="33" height="33" viewBox="0 0 33 33"><defs><linearGradient id="r" x1="0" y1="0" x2=".6" y2="1"><stop offset="0" stop-color="#e77b78"/><stop offset=".5" stop-color="#ca1d20"/><stop offset="1" stop-color="#b40d12"/></linearGradient></defs><circle cx="16" cy="16" r="15.500" fill="#e2e2e2" stroke="#777" stroke-width="1"/><circle cx="16" cy="16" r="13.900" fill="url(#r)" stroke="#9b1c1e" stroke-width=".6"/><path d="M9.500 9.500l13 13M22.500 9.500l-13 13" stroke="#f1f1f1" stroke-width="4.800"/></svg>
          <div>${t("Nie można ukończyć operacji, ponieważ widok konsoli Zarządzanie", 352)}${t("dyskami jest nieaktualny. Odśwież widok za pomocą zadania", 318)}${t("odświeżania. Jeżeli problem nie ustąpi, ponownie uruchom konsolę", 354)}${t("Zarządzanie dyskami lub ponownie uruchom komputer.", 295)}</div></div>
        <div class="df"><div class="ok">${t("OK", 16)}</div></div>
      </div>
    </div>`;
  }
}
